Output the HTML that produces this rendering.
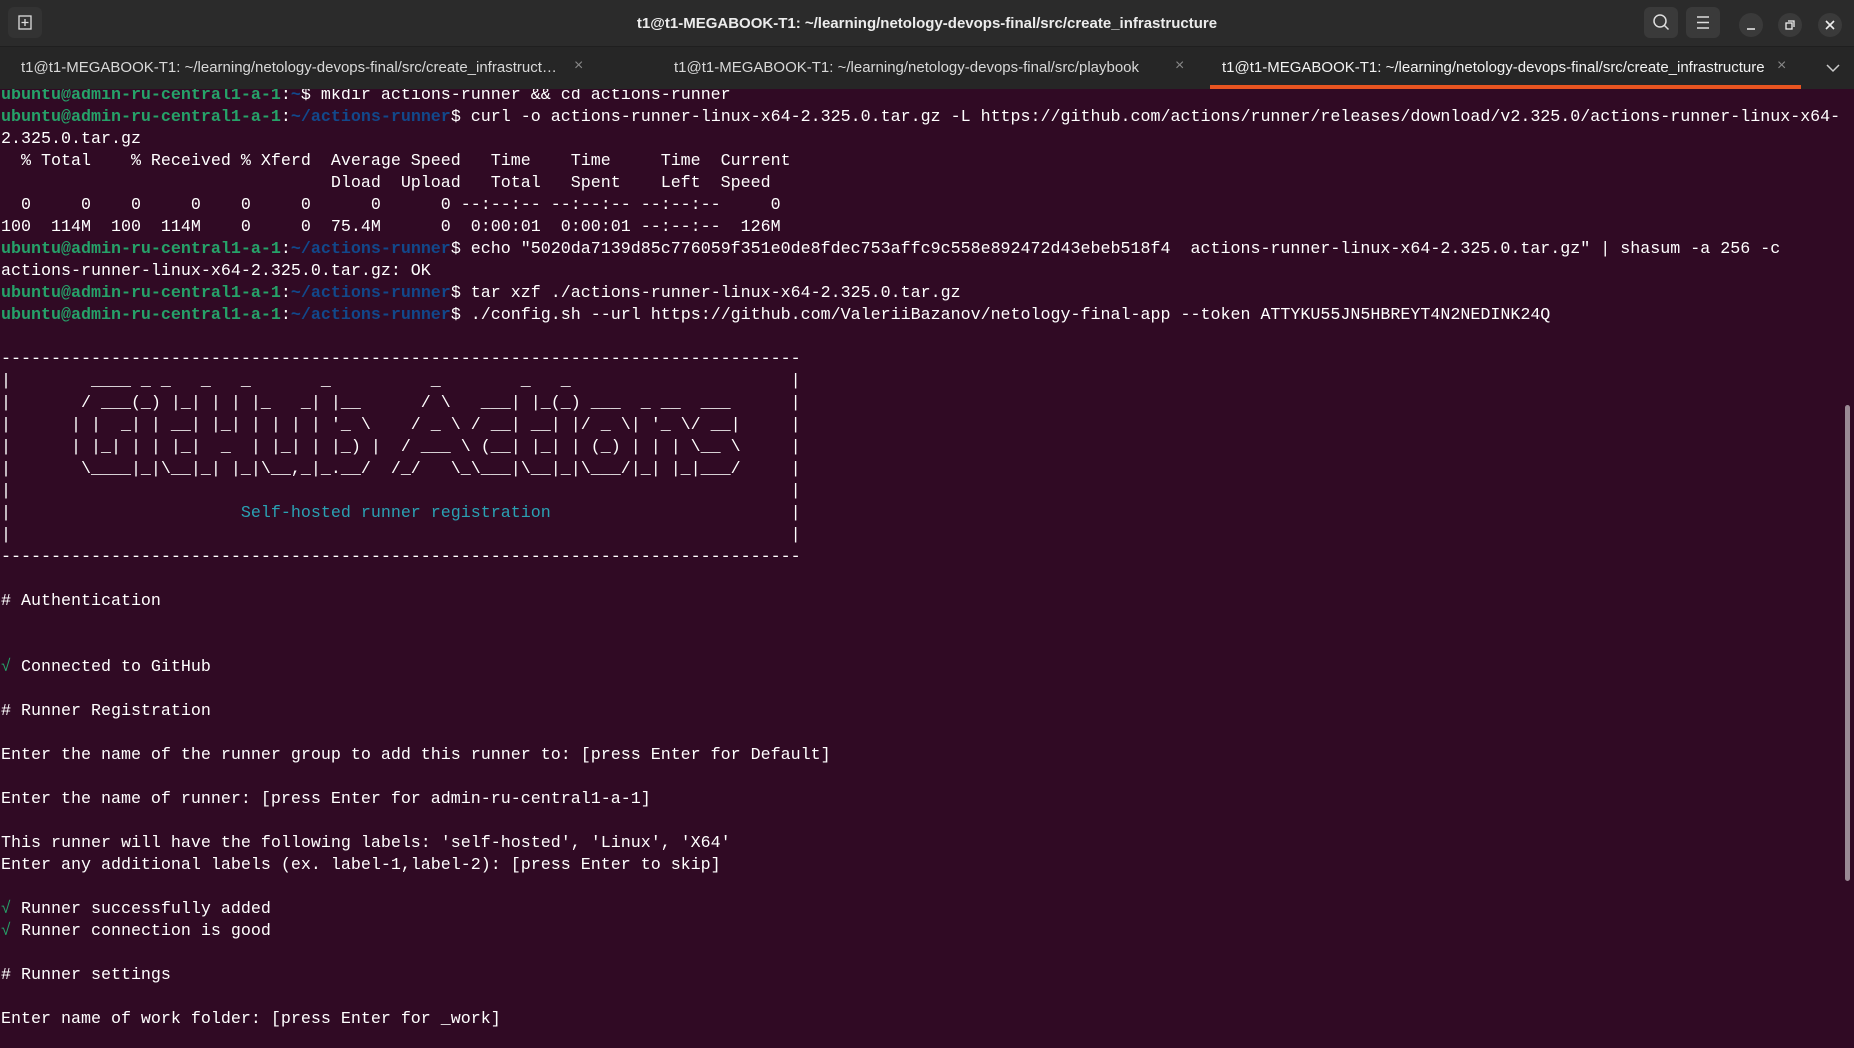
<!DOCTYPE html>
<html><head><meta charset="utf-8"><style>
html,body{margin:0;padding:0;width:1854px;height:1048px;overflow:hidden;background:#300a24;}
.title{position:absolute;left:0;top:0;width:1854px;height:46px;background:#2b2b2b;z-index:3;}
.title .t{position:absolute;left:0;width:1854px;top:15px;text-align:center;color:#ececec;font:bold 15px "Liberation Sans",sans-serif;}
.btn{position:absolute;top:7px;width:34px;height:31px;background:#3a3a3a;border-radius:6px;}
.circ{position:absolute;top:13px;width:24px;height:24px;border-radius:50%;background:#3a3a3a;}
.tabs{position:absolute;left:0;top:46px;width:1854px;height:42px;background:#262626;border-top:1px solid #1f1f1f;z-index:3;font:15px "Liberation Sans",sans-serif;color:#d8d8d8;}
.tab{position:absolute;top:12px;white-space:nowrap;}
.x{position:absolute;top:10px;color:#888;font:16px "Liberation Sans",sans-serif;}
.ul{position:absolute;left:1210px;width:591px;top:38px;height:4px;background:#e95420;}
pre{position:absolute;left:1px;top:85px;margin:0;font:16.67px/22px "Liberation Mono",monospace;color:#ffffff;white-space:pre;}
.g{color:#26a269;font-weight:bold}
.b{color:#12488b;font-weight:bold}
.c{color:#2aa1b3}
.sb{position:absolute;left:1845px;top:405px;width:5px;height:476px;background:#9a8a95;border-radius:3px;}
</style></head><body>
<div class="title">
 <div class="btn" style="left:8px;background:#333"><svg width="34" height="31"><rect x="11" y="9" width="12" height="13" fill="none" stroke="#ddd" stroke-width="1.3"/><path d="M17 12v7M13.5 15.5h7" stroke="#ddd" stroke-width="1.3"/></svg></div>
 <div class="t">t1@t1-MEGABOOK-T1: ~/learning/netology-devops-final/src/create_infrastructure</div>
 <div class="btn" style="left:1644px"><svg width="34" height="31"><circle cx="16" cy="14" r="6" fill="none" stroke="#ddd" stroke-width="1.5"/><path d="M20.5 18.5l4 4" stroke="#ddd" stroke-width="1.5"/></svg></div>
 <div class="btn" style="left:1686px"><svg width="34" height="31"><path d="M11 10h12M11 15.5h12M11 21h12" stroke="#ddd" stroke-width="1.4"/></svg></div>
 <div class="circ" style="left:1739px"><svg width="24" height="24"><path d="M8 16h8" stroke="#eee" stroke-width="1.5"/></svg></div>
 <div class="circ" style="left:1778px"><svg width="24" height="24"><rect x="8" y="10" width="6" height="6" fill="none" stroke="#eee" stroke-width="1.3"/><path d="M10 8h6v6" fill="none" stroke="#eee" stroke-width="1.3"/></svg></div>
 <div class="circ" style="left:1818px"><svg width="24" height="24"><path d="M8 8l8 8M16 8l-8 8" stroke="#eee" stroke-width="1.6"/></svg></div>
</div>
<div class="tabs">
 <div class="tab" style="left:21px">t1@t1-MEGABOOK-T1: ~/learning/netology-devops-final/src/create_infrastruct…</div><div class="x" style="left:574px">×</div>
 <div class="tab" style="left:674px">t1@t1-MEGABOOK-T1: ~/learning/netology-devops-final/src/playbook</div><div class="x" style="left:1175px">×</div>
 <div class="tab" style="left:1222px;color:#f2f2f2">t1@t1-MEGABOOK-T1: ~/learning/netology-devops-final/src/create_infrastructure</div><div class="x" style="left:1777px">×</div>
 <svg style="position:absolute;left:1825px;top:15px" width="16" height="12"><path d="M2 3l6 6 6-6" fill="none" stroke="#ccc" stroke-width="1.5"/></svg>
 <div class="ul"></div>
</div>
<pre><span class="g">ubuntu@admin-ru-central1-a-1</span>:<span class="b">~</span>$ mkdir actions-runner &amp;&amp; cd actions-runner
<span class="g">ubuntu@admin-ru-central1-a-1</span>:<span class="b">~/actions-runner</span>$ curl -o actions-runner-linux-x64-2.325.0.tar.gz -L https://github.com/actions/runner/releases/download/v2.325.0/actions-runner-linux-x64-
2.325.0.tar.gz
  % Total    % Received % Xferd  Average Speed   Time    Time     Time  Current
                                 Dload  Upload   Total   Spent    Left  Speed
  0     0    0     0    0     0      0      0 --:--:-- --:--:-- --:--:--     0
100  114M  100  114M    0     0  75.4M      0  0:00:01  0:00:01 --:--:--  126M
<span class="g">ubuntu@admin-ru-central1-a-1</span>:<span class="b">~/actions-runner</span>$ echo "5020da7139d85c776059f351e0de8fdec753affc9c558e892472d43ebeb518f4  actions-runner-linux-x64-2.325.0.tar.gz" | shasum -a 256 -c
actions-runner-linux-x64-2.325.0.tar.gz: OK
<span class="g">ubuntu@admin-ru-central1-a-1</span>:<span class="b">~/actions-runner</span>$ tar xzf ./actions-runner-linux-x64-2.325.0.tar.gz
<span class="g">ubuntu@admin-ru-central1-a-1</span>:<span class="b">~/actions-runner</span>$ ./config.sh --url https://github.com/ValeriiBazanov/netology-final-app --token ATTYKU55JN5HBREYT4N2NEDINK24Q

--------------------------------------------------------------------------------
|        ____ _ _   _   _       _          _        _   _                      |
|       / ___(_) |_| | | |_   _| |__      / \   ___| |_(_) ___  _ __  ___      |
|      | |  _| | __| |_| | | | | '_ \    / _ \ / __| __| |/ _ \| '_ \/ __|     |
|      | |_| | | |_|  _  | |_| | |_) |  / ___ \ (__| |_| | (_) | | | \__ \     |
|       \____|_|\__|_| |_|\__,_|_.__/  /_/   \_\___|\__|_|\___/|_| |_|___/     |
|                                                                              |
|                       <span class="c">Self-hosted runner registration</span>                        |
|                                                                              |
--------------------------------------------------------------------------------

# Authentication


<span class="g" style="font-weight:normal">√</span> Connected to GitHub

# Runner Registration

Enter the name of the runner group to add this runner to: [press Enter for Default]

Enter the name of runner: [press Enter for admin-ru-central1-a-1]

This runner will have the following labels: 'self-hosted', 'Linux', 'X64'
Enter any additional labels (ex. label-1,label-2): [press Enter to skip]

<span class="g" style="font-weight:normal">√</span> Runner successfully added
<span class="g" style="font-weight:normal">√</span> Runner connection is good

# Runner settings

Enter name of work folder: [press Enter for _work]</pre>
<div class="sb"></div>
</body></html>
